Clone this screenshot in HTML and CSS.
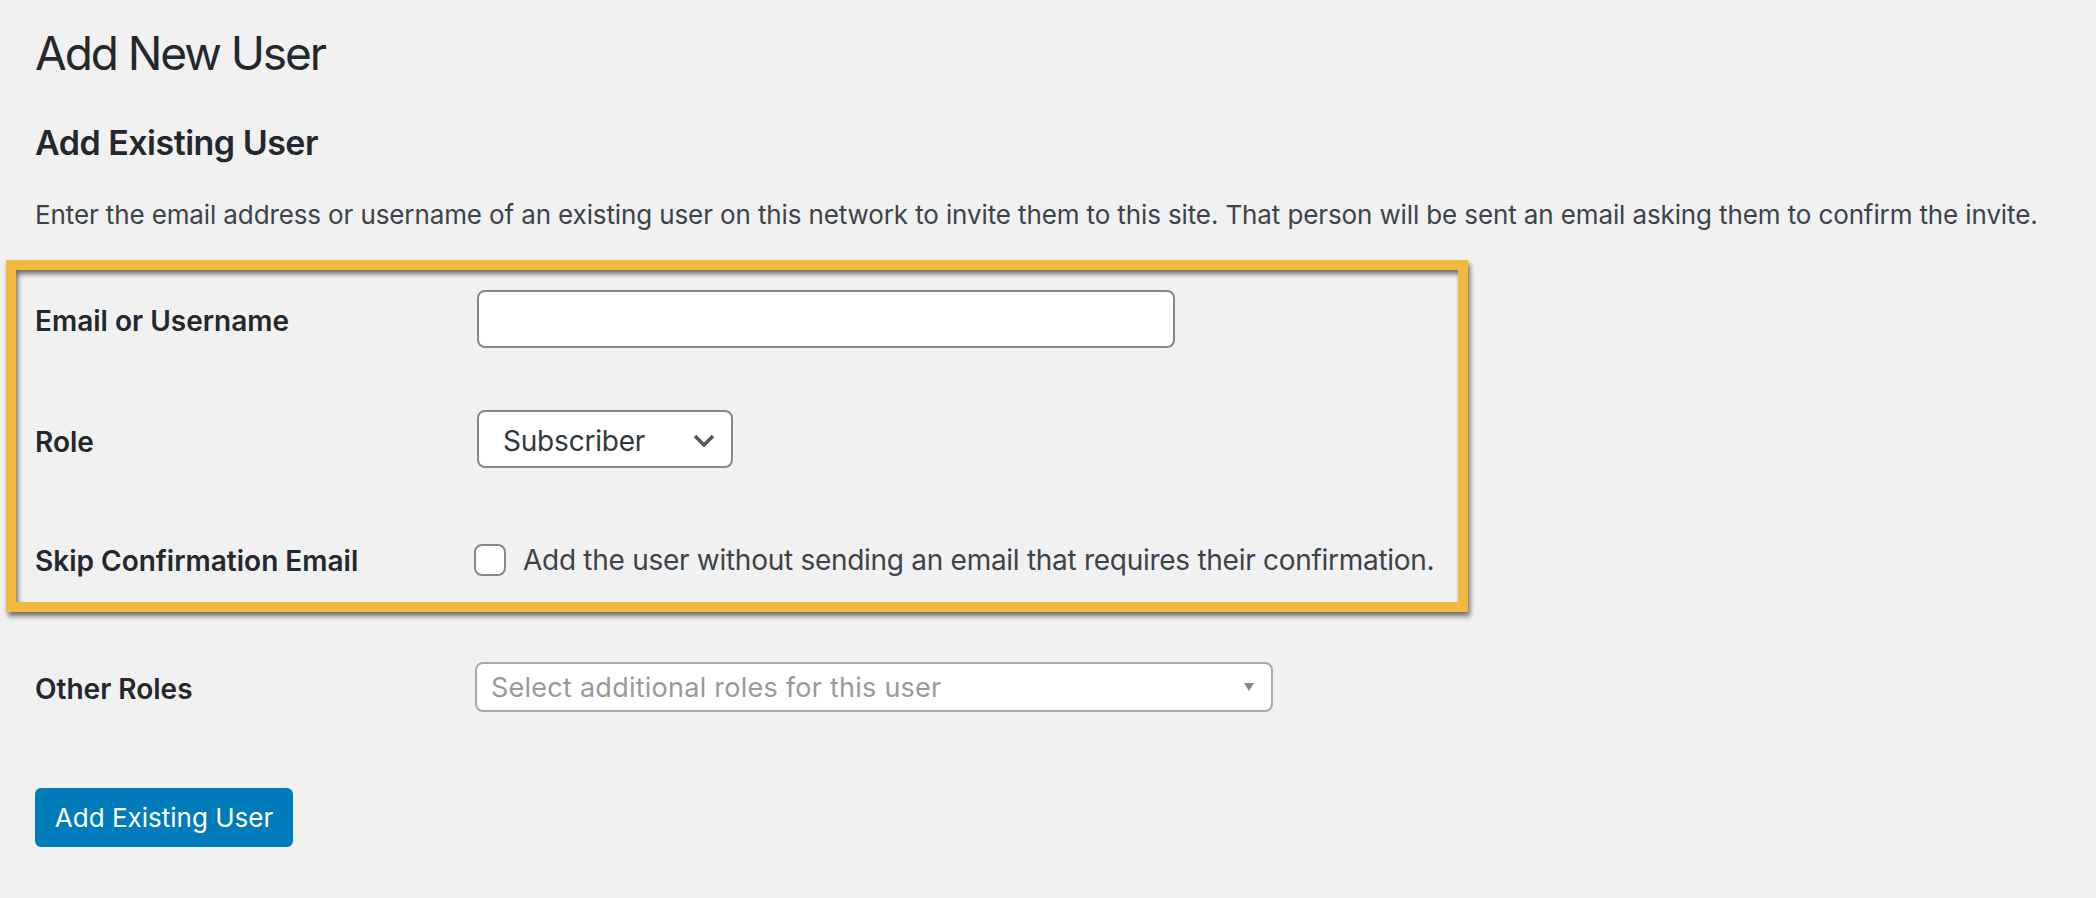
FILE: index.html
```html
<!DOCTYPE html>
<html lang="en">
<head>
<meta charset="utf-8">
<title>Add New User</title>
<link rel="stylesheet" href="styles.css">
</head>
<body>
<div class="wrap">
  <h1 class="page-title">Add New User</h1>
  <h2 class="section-title">Add Existing User</h2>
  <p class="desc">Enter the email address or username of an existing user on this network to invite them to this site. That person will be sent an email asking them to confirm the invite.</p>

  <div class="form">
    <div class="highlight"></div>

    <div class="row row-email">
      <div class="th"><label for="email">Email or Username</label></div>
      <div class="td"><input id="email" type="text" class="text-input"></div>
    </div>

    <div class="row row-role">
      <div class="th"><label>Role</label></div>
      <div class="td">
        <div class="select">
          <span class="select-value">Subscriber</span>
          <svg class="chevron" width="22" height="14" viewBox="0 0 22 14"><path d="M2 2 L11 11 L20 2" fill="none" stroke="#50575e" stroke-width="3.4"/></svg>
        </div>
      </div>
    </div>

    <div class="row row-skip">
      <div class="th"><label>Skip Confirmation Email</label></div>
      <div class="td">
        <label class="check-label"><input type="checkbox" class="checkbox"><span>Add the user without sending an email that requires their confirmation.</span></label>
      </div>
    </div>

    <div class="row row-other">
      <div class="th"><label>Other Roles</label></div>
      <div class="td">
        <div class="select2">
          <span class="placeholder">Select additional roles for this user</span>
          <span class="s2-arrow"></span>
        </div>
      </div>
    </div>
  </div>

  <div class="submit">
    <button class="btn-primary" type="button">Add Existing User</button>
  </div>
</div>
</body>
</html>
```

FILE: styles.css
```css
html, body {
  margin: 0;
  padding: 0;
}

body {
  background: #f1f1f1;
  font-family: Inter, "Noto Sans", "Liberation Sans", sans-serif;
  color: #23282d;
  width: 2096px;
  height: 898px;
  overflow: hidden;
}

.wrap {
  padding-left: 35px;
  padding-top: 23px;
}

.page-title {
  margin: 0;
  font-size: 46px;
  line-height: 60px;
  font-weight: 400;
  letter-spacing: -0.045em;
  color: #23282d;
}

.section-title {
  margin: 38px 0 0;
  font-size: 34px;
  line-height: 44px;
  font-weight: 600;
  letter-spacing: -0.015em;
  color: #23282d;
}

.desc {
  margin: 32px 0 0;
  font-size: 26px;
  line-height: 36px;
  letter-spacing: -0.12px;
  color: #3c434a;
}

.form {
  position: relative;
  margin-top: 27px;
}

.highlight {
  position: absolute;
  left: -29px;
  top: 0;
  width: 1442px;
  height: 332px;
  border: 10px solid #f1ba3f;
  box-shadow: 2px 4px 5px rgba(0, 0, 0, 0.55), inset 2px 4px 5px rgba(0, 0, 0, 0.55);
  pointer-events: none;
  z-index: 2;
}

.row {
  display: flex;
  align-items: center;
}

.row-email {
  padding: 30px 0;
}

.row-role {
  padding: 32px 0 28px;
}

.row-skip {
  padding: 44px 0 56px;
}

.row-other {
  padding: 27px 0 30px;
}

.th {
  width: 442px;
  flex: none;
  padding-top: 3px;
}

.row-role .th {
  padding-top: 5px;
}

.th label {
  font-size: 28px;
  line-height: 36px;
  font-weight: 600;
  color: #23282d;
}

.td {
  flex: 1;
  display: flex;
  align-items: center;
}

.text-input {
  box-sizing: border-box;
  width: 698px;
  height: 58px;
  margin: 0;
  border: 2px solid #7e8993;
  border-radius: 8px;
  background: #fff;
  font-family: inherit;
  font-size: 28px;
  padding: 0 16px;
  outline: none;
}

.select {
  box-sizing: border-box;
  width: 256px;
  height: 58px;
  border: 2px solid #7e8993;
  border-radius: 8px;
  background: #fff;
  display: flex;
  align-items: center;
  justify-content: space-between;
  padding: 3px 16px 0 24px;
}

.select-value {
  font-size: 28px;
  letter-spacing: -0.2px;
  color: #32373c;
}

.chevron {
  display: block;
}

.check-label {
  display: flex;
  align-items: center;
  margin-left: -3px;
}

.checkbox {
  appearance: none;
  -webkit-appearance: none;
  box-sizing: border-box;
  width: 32px;
  height: 32px;
  margin: 0 17px 0 0;
  border: 2px solid #7e8993;
  border-radius: 8px;
  background: #fff;
  flex: none;
}

.check-label span {
  font-size: 28px;
  line-height: 36px;
  letter-spacing: -0.28px;
  color: #3c434a;
}

.select2 {
  box-sizing: border-box;
  width: 798px;
  height: 50px;
  margin-left: -2px;
  border: 2px solid #aaa;
  border-radius: 8px;
  background: #fff;
  display: flex;
  align-items: center;
  justify-content: space-between;
  padding: 0 17px 0 14px;
}

.placeholder {
  font-size: 27px;
  letter-spacing: 0.25px;
  color: #999;
}

.s2-arrow {
  width: 0;
  height: 0;
  border-style: solid;
  border-width: 8px 5px 0 5px;
  border-color: #888 transparent transparent transparent;
}

.submit {
  margin-top: 46px;
}

.btn-primary {
  box-sizing: border-box;
  width: 258px;
  height: 59px;
  margin: 0;
  padding: 0;
  border: 2px solid #007cba;
  border-radius: 6px;
  background: #007cba;
  color: #fff;
  font-family: inherit;
  font-size: 26px;
  font-weight: 400;
  cursor: pointer;
}
```
